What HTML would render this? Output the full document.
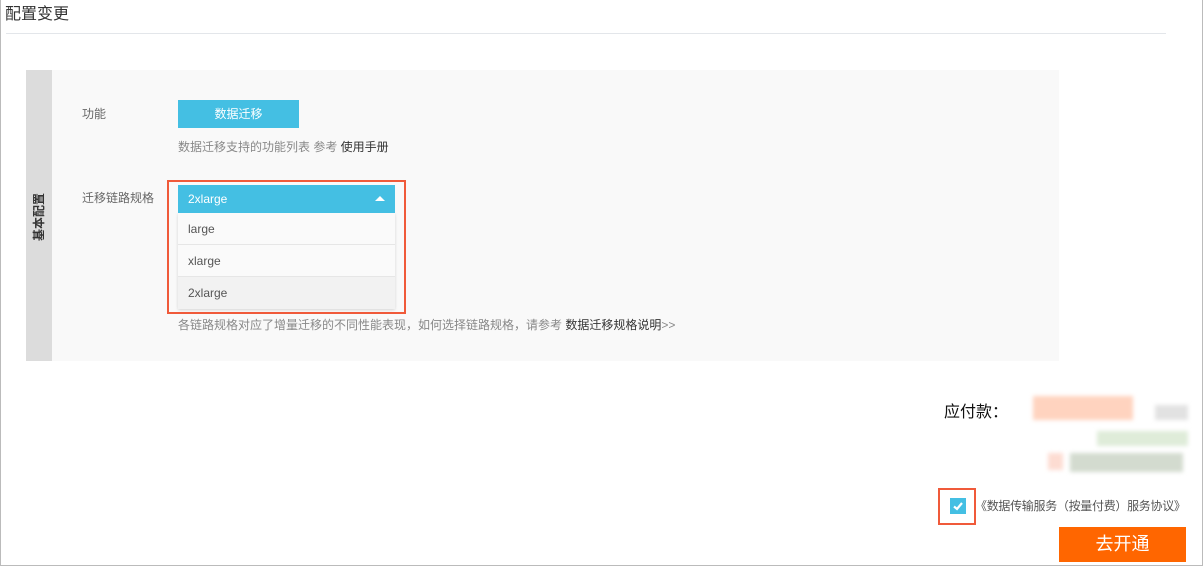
<!DOCTYPE html>
<html><head><meta charset="utf-8"><style>
*{margin:0;padding:0;box-sizing:border-box}
body{width:1203px;height:566px;background:#fff;position:relative;overflow:hidden;font-family:"Liberation Sans","Noto Sans CJK SC",sans-serif;font-size:12px;color:#666}
.a{position:absolute;white-space:nowrap}
</style></head><body>
<div class="a" style="left:0;top:0;width:1203px;height:566px;border:1px solid #bbb;border-top:none"></div>
<div class="a" style="left:5px;top:5px;font-size:16px;color:#333;line-height:20px">配置变更</div>
<div class="a" style="left:6px;top:33px;width:1160px;height:1px;background:#e3e6ea"></div>
<div class="a" style="left:26px;top:70px;width:1033px;height:291px;background:#f9f9f9"></div>
<div class="a" style="left:26px;top:70px;width:26px;height:291px;background:#dcdcdc"></div>
<div class="a" style="left:9px;top:209px;width:60px;height:16px;line-height:16px;text-align:center;transform:rotate(-90deg);font-weight:bold;color:#333;font-size:12px">基本配置</div>
<div class="a" style="left:82px;top:106px;line-height:16px">功能</div>
<div class="a" style="left:178px;top:100px;width:121px;height:28px;background:#44bfe3;color:#fff;text-align:center;line-height:28px">数据迁移</div>
<div class="a" style="left:178px;top:139px;line-height:16px;color:#888">数据迁移支持的功能列表 参考 <span style="color:#333">使用手册</span></div>
<div class="a" style="left:82px;top:190px;line-height:16px">迁移链路规格</div>
<div class="a" style="left:178px;top:213px;width:217px;height:96px;background:#fafafa;box-shadow:0 1px 3px rgba(0,0,0,.15)"></div>
<div class="a" style="left:178px;top:185px;width:217px;height:28px;background:#44bfe3;color:#fff;line-height:28px;padding-left:10px">2xlarge</div>
<div class="a" style="left:375px;top:196px;width:0;height:0;border-left:5px solid transparent;border-right:5px solid transparent;border-bottom:5px solid #fff"></div>
<div class="a" style="left:178px;top:213px;width:217px;height:32px;line-height:32px;padding-left:10px;color:#555;border-bottom:1px solid #e6e6e6">large</div>
<div class="a" style="left:178px;top:245px;width:217px;height:32px;line-height:32px;padding-left:10px;color:#555;border-bottom:1px solid #e6e6e6">xlarge</div>
<div class="a" style="left:178px;top:277px;width:217px;height:32px;line-height:32px;padding-left:10px;color:#555;background:#f2f2f2">2xlarge</div>
<div class="a" style="left:167px;top:180px;width:239px;height:134px;border:2px solid #f05a3a"></div>
<div class="a" style="left:178px;top:317px;line-height:16px;color:#888">各链路规格对应了增量迁移的不同性能表现，如何选择链路规格，请参考 <span style="color:#333">数据迁移规格说明</span>&gt;&gt;</div>
<div class="a" style="left:944px;top:403px;font-size:16px;color:#111;line-height:20px">应付款：</div>
<div class="a" style="left:1033px;top:396px;width:100px;height:24px;background:#ffd3bf;filter:blur(2px)"></div>
<div class="a" style="left:1155px;top:405px;width:33px;height:15px;background:#e2e2e2;filter:blur(2px)"></div>
<div class="a" style="left:1097px;top:431px;width:91px;height:15px;background:#dfecd9;filter:blur(2px)"></div>
<div class="a" style="left:1048px;top:453px;width:15px;height:17px;background:#fddcd2;filter:blur(2px)"></div>
<div class="a" style="left:1070px;top:453px;width:113px;height:19px;background:#d3dbcf;filter:blur(2px)"></div>
<div class="a" style="left:938px;top:488px;width:38px;height:37px;border:2px solid #f05a3a"></div>
<div class="a" style="left:950px;top:498px;width:16px;height:16px;background:#44bfe3"></div>
<svg class="a" style="left:950px;top:498px" width="16" height="16"><path d="M4 8.5L7 11L12 5" stroke="#fff" stroke-width="2.2" fill="none"/></svg>
<div class="a" style="left:975px;top:498px;line-height:16px;color:#555;letter-spacing:-0.3px">《数据传输服务（按量付费）服务协议》</div>
<div class="a" style="left:1059px;top:527px;width:127px;height:35px;background:#ff6600;color:#fff;font-size:18px;text-align:center;line-height:35px">去开通</div>
</body></html>
